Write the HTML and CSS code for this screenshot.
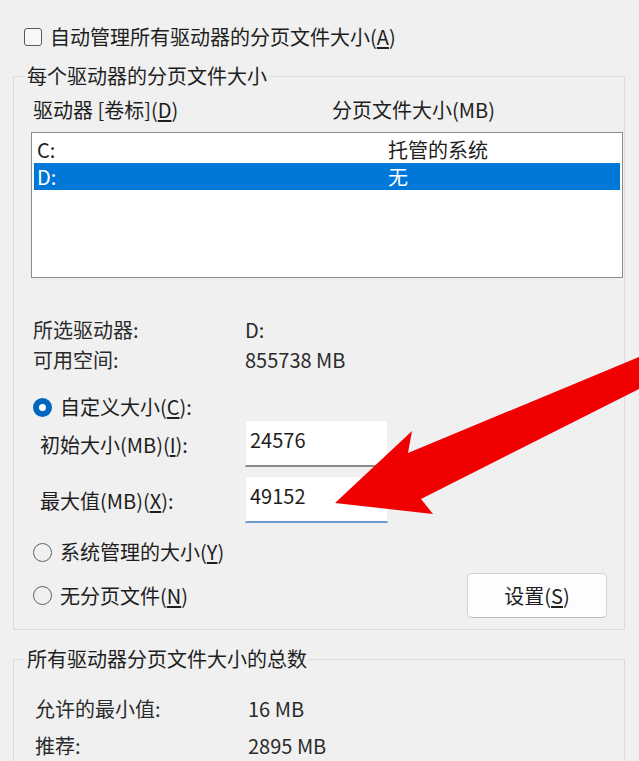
FILE: index.html
```html
<!DOCTYPE html>
<html lang="zh-CN">
<head>
    <meta charset="UTF-8">
    <meta name="viewport" content="width=device-width, initial-scale=1.0">
    <title>虚拟内存</title>
    <link rel="stylesheet" href="styles.css">
</head>
<body>
    <div class="dialog">
        <!-- Automatic management -->
        <label class="check-row">
            <span class="checkbox"></span>
            <span>自动管理所有驱动器的分页文件大小(<u>A</u>)</span>
        </label>

        <!-- Per-drive settings -->
        <fieldset class="group">
            <legend>每个驱动器的分页文件大小</legend>
            <div class="list-head">
                <span>驱动器 [卷标](<u>D</u>)</span>
                <span>分页文件大小(MB)</span>
            </div>
            <div class="listbox">
                <div class="list-row"><span>C:</span><span>托管的系统</span></div>
                <div class="list-row selected"><span>D:</span><span>无</span></div>
            </div>

            <div class="info">
                <span>所选驱动器:</span><span>D:</span>
                <span>可用空间:</span><span>855738 MB</span>
            </div>

            <label class="radio-row custom">
                <span class="radio checked"></span>
                <span>自定义大小(<u>C</u>):</span>
            </label>
            <div class="size-grid">
                <label>初始大小(MB)(<u>I</u>):</label>
                <input class="text-box" type="text" value="24576">
                <label>最大值(MB)(<u>X</u>):</label>
                <input class="text-box focused" type="text" value="49152">
            </div>

            <label class="radio-row system">
                <span class="radio"></span>
                <span>系统管理的大小(<u>Y</u>)</span>
            </label>
            <div class="bottom-row">
                <label class="radio-row">
                    <span class="radio"></span>
                    <span>无分页文件(<u>N</u>)</span>
                </label>
                <button class="btn">设置(<u>S</u>)</button>
            </div>
        </fieldset>

        <!-- Totals -->
        <fieldset class="group total">
            <legend>所有驱动器分页文件大小的总数</legend>
            <div class="info totals">
                <span>允许的最小值:</span><span>16 MB</span>
                <span>推荐:</span><span>2895 MB</span>
            </div>
        </fieldset>
    </div>

    <!-- Red annotation arrow drawn over the dialog -->
    <svg class="arrow" viewBox="0 0 639 761">
        <polygon points="335,503 412,431 408,453 639,357 639,389 421,499 433,514"></polygon>
    </svg>
</body>
</html>
```

FILE: styles.css
```css
/* styles.css */
html {
    overflow: hidden;
}

body {
    margin: 0;
    background: #f0f0f0;
    color: #1e1e1e;
    font-family: "Noto Sans CJK SC", "Microsoft YaHei", sans-serif;
    font-size: 20px;
    line-height: 24px;
}

u {
    text-underline-offset: 2px;
}

.dialog {
    padding: 25px 14px 0 13px;
}

/* checkbox row */
.check-row {
    display: flex;
    align-items: center;
    gap: 8px;
    padding-left: 11px;
    height: 24px;
}

.checkbox {
    width: 18px;
    height: 18px;
    box-sizing: border-box;
    border: 1.5px solid #5a5a5a;
    border-radius: 3px;
    background: #f7f7f7;
}

/* group boxes */
.group {
    margin: 15px 0 0;
    padding: 0 0 11px;
    min-width: 0;
    border: 1px solid #dcdcdc;
}

.group legend {
    margin-left: 11px;
    padding: 0 2px;
    line-height: 24px;
}

.group.total {
    margin-top: 17px;
    padding-bottom: 0;
}

.list-head {
    display: grid;
    grid-template-columns: 299px 1fr;
    margin-top: 10px;
    padding-left: 19px;
}

.listbox {
    margin: 10px 1px 0 17px;
    height: 146px;
    box-sizing: border-box;
    padding: 3px 2px;
    background: #fff;
    border: 1px solid #8c8c8c;
}

.list-row {
    display: grid;
    grid-template-columns: 351px 1fr;
    height: 27px;
    line-height: 27px;
    padding-left: 3px;
}

.list-row.selected {
    background: #0078d7;
    color: #fff;
}

.info {
    display: grid;
    grid-template-columns: 212px 1fr;
    margin-top: 37px;
    padding-left: 19px;
    line-height: 30px;
    color: #2b2b2b;
}

.info.totals {
    grid-template-columns: 213px 1fr;
    margin-top: 19px;
    padding-left: 21px;
    line-height: 37px;
}

/* radio buttons */
.radio-row {
    display: flex;
    align-items: center;
    gap: 8px;
    height: 24px;
    margin-left: 19px;
}

.radio-row.custom {
    margin-top: 20px;
}

.radio-row.system {
    margin-top: 17px;
}

.radio {
    width: 19px;
    height: 19px;
    box-sizing: border-box;
    border: 1.5px solid #606060;
    border-radius: 50%;
}

.radio.checked {
    border: 6px solid #0067c0;
    background: #fff;
}

/* size inputs */
.size-grid {
    display: grid;
    grid-template-columns: 205px 143px;
    row-gap: 9px;
    align-items: center;
    margin-top: 1px;
    padding-left: 26px;
}

.size-grid label {
    padding-top: 3px;
}

.text-box {
    width: 143px;
    height: 47px;
    box-sizing: border-box;
    margin: 0;
    padding: 6px 4px 14px;
    font: inherit;
    line-height: 24px;
    color: #1e1e1e;
    background: #fff;
    border: 1px solid #ededed;
    border-bottom: 2px solid #8a8a8a;
    border-radius: 0;
    outline: none;
}

.text-box.focused {
    border-bottom-color: #6b9ad0;
}

.bottom-row {
    display: flex;
    align-items: center;
    justify-content: space-between;
    margin-top: 9px;
    padding-right: 17px;
}

.btn {
    width: 140px;
    height: 45px;
    font: inherit;
    color: #1e1e1e;
    background: #fdfdfd;
    border: 1px solid #d3d3d3;
    border-bottom-color: #bdbdbd;
    border-radius: 5px;
    cursor: pointer;
}

/* annotation */
.arrow {
    position: absolute;
    top: 0;
    left: 0;
    width: 639px;
    height: 761px;
    pointer-events: none;
}

.arrow polygon {
    fill: #f00000;
}
```
